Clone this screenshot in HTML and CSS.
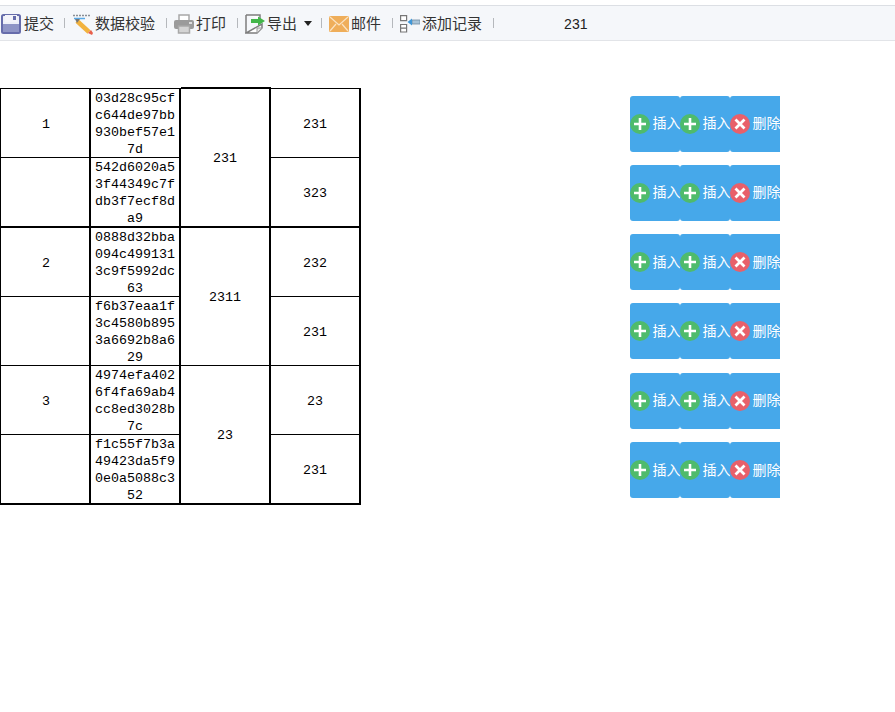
FILE: index.html
```html
<!DOCTYPE html>
<html lang="zh-CN">
<head>
<meta charset="utf-8">
<title>Report</title>
<link rel="stylesheet" href="styles.css">
</head>
<body>
<div class="toolbar">
  <span class="tool tool-submit"><svg class="ic" width="20" height="20" viewBox="0 0 20 20"><rect x="1" y="1" width="18" height="18" rx="1.500" fill="#eef0f8" stroke="#666cab" stroke-width="2"/><rect x="4" y="1" width="12" height="7" fill="#f4f4fa"/><rect x="12" y="2" width="3" height="4" fill="#666cab"/><rect x="2" y="10" width="16" height="8" fill="#8f95c6"/></svg><span class="t">提交</span></span>
  <i class="sep sep-first"></i>
  <span class="tool"><svg class="ic" width="20" height="21" viewBox="0 0 20 21"><path d="M0 1.500h18" stroke="#8a8f96" stroke-width="1.500" stroke-dasharray="2 1"/><path d="M1 4.500h11" stroke="#5aa9e6" stroke-width="1.500"/><path d="M4 7l12 11" stroke="#f2b23e" stroke-width="4.500"/><path d="M2 5l5 0-3 4z" fill="#777"/><path d="M15 19l3-3 2 3-1 2z" fill="#e8604c"/></svg><span class="t">数据校验</span></span>
  <i class="sep"></i>
  <span class="tool"><svg class="ic" width="20" height="20" viewBox="0 0 20 20"><rect x="5" y="1" width="10" height="6" fill="#fff" stroke="#a8a8a8" stroke-width="1.500"/><rect x="0" y="6" width="20" height="9" rx="2" fill="#9b9b9b"/><rect x="4.500" y="12" width="11" height="7" fill="#d4d4d4" stroke="#a8a8a8" stroke-width="1.500"/><rect x="15" y="8" width="3" height="2" fill="#ddd"/></svg><span class="t">打印</span></span>
  <i class="sep"></i>
  <span class="tool"><svg class="ic" width="20" height="20" viewBox="0 0 20 20"><path d="M1 1h14v4M17 10v4l-5 5H1z" fill="#fff" stroke="#7d7d7d" stroke-width="1.500"/><path d="M1 1v18" stroke="#7d7d7d" stroke-width="1.500"/><path d="M17 14h-5v5z" fill="#e6e6e6" stroke="#999"/><path d="M6 5h7V2.500L20 7l-7 4.500V9H6z" fill="#43b649"/></svg><span class="t">导出</span><svg class="caret" width="8" height="5" viewBox="0 0 8 5"><path d="M0 0h8L4 5z" fill="#222"/></svg></span>
  <i class="sep sep-caret"></i>
  <span class="tool"><svg class="ic" width="20" height="16" viewBox="0 0 20 16"><rect width="20" height="16" rx="1.500" fill="#efae5a"/><path d="M1 1l9 8 9-8M1 15l6-7M19 15l-6-7" fill="none" stroke="#fbe3c2" stroke-width="1.200"/></svg><span class="t">邮件</span></span>
  <i class="sep"></i>
  <span class="tool"><svg class="ic" width="20" height="18" viewBox="0 0 20 18"><path d="M.600.600h6v5h-6zM.600 9.500h6v7.500h-6zM.600 13.200h6" fill="#fff" stroke="#777" stroke-width="1.200"/><rect x="12" y="5" width="8" height="4" fill="#a9c4d8" stroke="#6f8ba0" stroke-width=".8"/><path d="M12 3.500v7L7.500 7z" fill="#3f97d8"/></svg><span class="t">添加记录</span></span>
  <i class="sep sep-last"></i>
  <span class="toolvalue">231</span>
</div>
<main class="content">
  <div class="grid">
    <div class="cell idx">1</div><div class="cell hash">03d28c95cf<br>c644de97bb<br>930bef57e1<br>7d</div><div class="cell merged selected">231</div><div class="cell">231</div>
    <div class="cell thick"></div><div class="cell hash thick">542d6020a5<br>3f44349c7f<br>db3f7ecf8d<br>a9</div><div class="cell thick">323</div>
    <div class="cell idx">2</div><div class="cell hash">0888d32bba<br>094c499131<br>3c9f5992dc<br>63</div><div class="cell merged">2311</div><div class="cell">232</div>
    <div class="cell"></div><div class="cell hash">f6b37eaa1f<br>3c4580b895<br>3a6692b8a6<br>29</div><div class="cell">231</div>
    <div class="cell idx">3</div><div class="cell hash">4974efa402<br>6f4fa69ab4<br>cc8ed3028b<br>7c</div><div class="cell merged thick">23</div><div class="cell">23</div>
    <div class="cell thick"></div><div class="cell hash thick">f1c55f7b3a<br>49423da5f9<br>0e0a5088c3<br>52</div><div class="cell thick">231</div>
  </div>
  <div class="actions">
    <div class="action-row"><span class="btn"><i class="dot add"><svg width="14" height="14" viewBox="0 0 14 14"><path d="M7 1v12M1 7h12" stroke="#fff" stroke-width="2.600"/></svg></i><span class="lbl">插入</span></span><span class="btn"><i class="dot add"><svg width="14" height="14" viewBox="0 0 14 14"><path d="M7 1v12M1 7h12" stroke="#fff" stroke-width="2.600"/></svg></i><span class="lbl">插入</span></span><span class="btn"><i class="dot del"><svg width="12" height="12" viewBox="0 0 12 12"><path d="M1.500 1.500l9 9M10.500 1.500l-9 9" stroke="#fff" stroke-width="2.800"/></svg></i><span class="lbl">删除</span></span></div>
    <div class="action-row"><span class="btn"><i class="dot add"><svg width="14" height="14" viewBox="0 0 14 14"><path d="M7 1v12M1 7h12" stroke="#fff" stroke-width="2.600"/></svg></i><span class="lbl">插入</span></span><span class="btn"><i class="dot add"><svg width="14" height="14" viewBox="0 0 14 14"><path d="M7 1v12M1 7h12" stroke="#fff" stroke-width="2.600"/></svg></i><span class="lbl">插入</span></span><span class="btn"><i class="dot del"><svg width="12" height="12" viewBox="0 0 12 12"><path d="M1.500 1.500l9 9M10.500 1.500l-9 9" stroke="#fff" stroke-width="2.800"/></svg></i><span class="lbl">删除</span></span></div>
    <div class="action-row"><span class="btn"><i class="dot add"><svg width="14" height="14" viewBox="0 0 14 14"><path d="M7 1v12M1 7h12" stroke="#fff" stroke-width="2.600"/></svg></i><span class="lbl">插入</span></span><span class="btn"><i class="dot add"><svg width="14" height="14" viewBox="0 0 14 14"><path d="M7 1v12M1 7h12" stroke="#fff" stroke-width="2.600"/></svg></i><span class="lbl">插入</span></span><span class="btn"><i class="dot del"><svg width="12" height="12" viewBox="0 0 12 12"><path d="M1.500 1.500l9 9M10.500 1.500l-9 9" stroke="#fff" stroke-width="2.800"/></svg></i><span class="lbl">删除</span></span></div>
    <div class="action-row"><span class="btn"><i class="dot add"><svg width="14" height="14" viewBox="0 0 14 14"><path d="M7 1v12M1 7h12" stroke="#fff" stroke-width="2.600"/></svg></i><span class="lbl">插入</span></span><span class="btn"><i class="dot add"><svg width="14" height="14" viewBox="0 0 14 14"><path d="M7 1v12M1 7h12" stroke="#fff" stroke-width="2.600"/></svg></i><span class="lbl">插入</span></span><span class="btn"><i class="dot del"><svg width="12" height="12" viewBox="0 0 12 12"><path d="M1.500 1.500l9 9M10.500 1.500l-9 9" stroke="#fff" stroke-width="2.800"/></svg></i><span class="lbl">删除</span></span></div>
    <div class="action-row"><span class="btn"><i class="dot add"><svg width="14" height="14" viewBox="0 0 14 14"><path d="M7 1v12M1 7h12" stroke="#fff" stroke-width="2.600"/></svg></i><span class="lbl">插入</span></span><span class="btn"><i class="dot add"><svg width="14" height="14" viewBox="0 0 14 14"><path d="M7 1v12M1 7h12" stroke="#fff" stroke-width="2.600"/></svg></i><span class="lbl">插入</span></span><span class="btn"><i class="dot del"><svg width="12" height="12" viewBox="0 0 12 12"><path d="M1.500 1.500l9 9M10.500 1.500l-9 9" stroke="#fff" stroke-width="2.800"/></svg></i><span class="lbl">删除</span></span></div>
    <div class="action-row"><span class="btn"><i class="dot add"><svg width="14" height="14" viewBox="0 0 14 14"><path d="M7 1v12M1 7h12" stroke="#fff" stroke-width="2.600"/></svg></i><span class="lbl">插入</span></span><span class="btn"><i class="dot add"><svg width="14" height="14" viewBox="0 0 14 14"><path d="M7 1v12M1 7h12" stroke="#fff" stroke-width="2.600"/></svg></i><span class="lbl">插入</span></span><span class="btn"><i class="dot del"><svg width="12" height="12" viewBox="0 0 12 12"><path d="M1.500 1.500l9 9M10.500 1.500l-9 9" stroke="#fff" stroke-width="2.800"/></svg></i><span class="lbl">删除</span></span></div>
  </div>
</main>
</body>
</html>
```
FILE: styles.css
```css
html, body { margin: 0; padding: 0; background: #fff; }
body { font-family: "Noto Sans CJK SC", "Liberation Sans", sans-serif; overflow: hidden; }
.toolbar {
  margin-top: 5px; height: 34px;
  background: #f5f7fa; border-top: 1px solid #dcdfe4; border-bottom: 1px solid #e2e4e8;
  display: flex; align-items: center; font-size: 15px; line-height: 20px; color: #333; white-space: nowrap;
  padding-left: 1px;
}
.tool { display: flex; align-items: center; gap: 2px; }
.tool-submit { gap: 3px; }
.t { margin-bottom: 1px; }
.ic { display: block; flex: none; margin-top: 2px; }
.caret { margin-left: 5px; }
.sep { width: 1px; height: 10px; background: #b5b8bc; flex: none; margin: 0 7px 0 11px; }
.sep-first { margin: 0 8px 0 10px; }
.sep-caret { margin-left: 9px; }
.sep-last { margin-right: 0; }
.toolvalue { margin-left: 70px; margin-top: 1px; font-size: 14px; font-family: "Liberation Sans", sans-serif; color: #222; }
.content { display: flex; align-items: flex-start; margin-top: 47px; }
.grid {
  display: grid; flex: none; width: 361px; box-sizing: border-box;
  grid-template-columns: repeat(4, 90px);
  grid-template-rows: 69px 70px 69px 69px 69px 70px;
  border-top: 1px solid #000; border-left: 1px solid #000;
  font-family: "Liberation Mono", monospace; font-size: 13.33px; color: #000;
}
.cell {
  box-sizing: border-box; border-right: 2px solid #000; border-bottom: 1px solid #000; padding-top: 2px;
  display: flex; align-items: center; justify-content: center; text-align: center; line-height: 17px; overflow: hidden;
}
.cell.thick { border-bottom-width: 2px; }
.idx { padding-left: 2px; }
.merged { grid-row: span 2; }
.selected { margin-top: -2px; border-top: 2px solid #000; border-bottom-width: 2px; }
.actions { margin-left: 269px; margin-top: 7.55px; display: flex; flex-direction: column; gap: 13.3px; }
.action-row { display: flex; width: 150px; height: 56px; }
.btn { width: 50px; height: 56px; background: #46a8ea; border-radius: 3px; display: flex; align-items: center; overflow: hidden; color: #fff; font-size: 14px; line-height: 20px; white-space: nowrap; flex: none; }
.btn:last-child { border-radius: 3px 0 0 3px; }
.dot { width: 20px; height: 20px; border-radius: 50%; flex: none; display: flex; align-items: center; justify-content: center; }
.dot.add { background: #4fbb6c; }
.dot.del { background: #e8606a; }
.lbl { margin-left: 2.500px; margin-bottom: 3px; }
```
